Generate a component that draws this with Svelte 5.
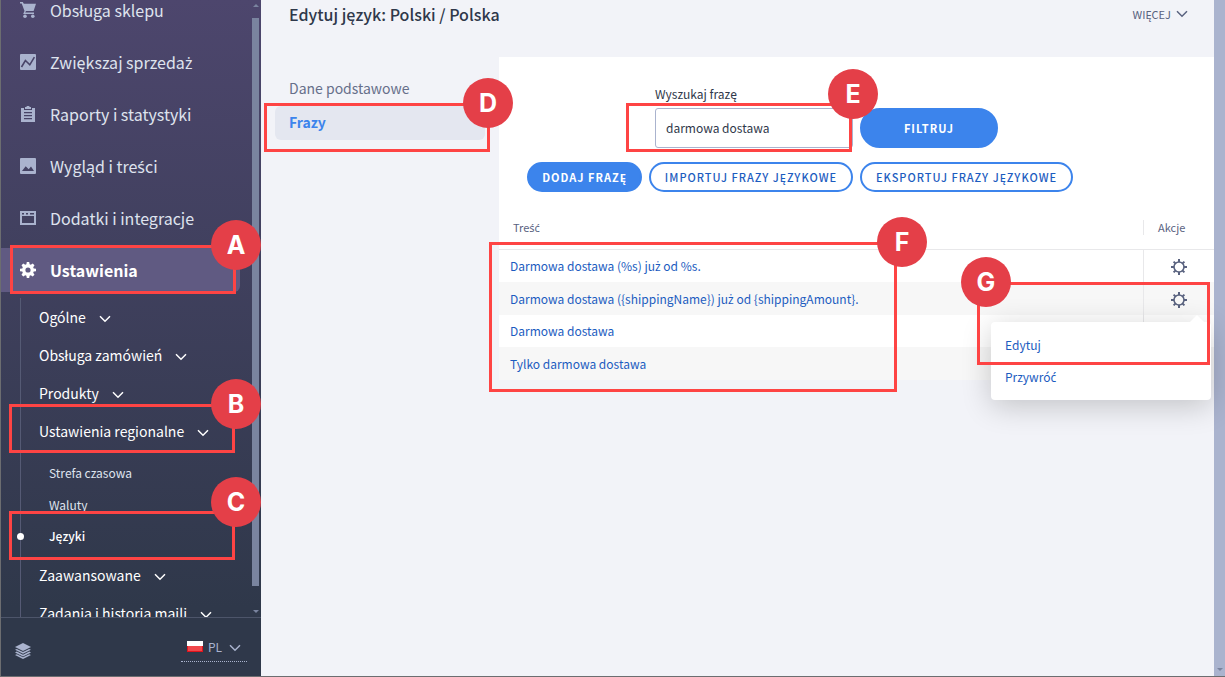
<script>
  const mainMenu = [
    { icon: 'cart', label: 'Obsługa sklepu' },
    { icon: 'chart', label: 'Zwiększaj sprzedaż' },
    { icon: 'clipboard', label: 'Raporty i statystyki' },
    { icon: 'picture', label: 'Wygląd i treści' },
    { icon: 'window', label: 'Dodatki i integracje' },
    { icon: 'gear', label: 'Ustawienia', active: true }
  ];

  const subMenu = [
    { label: 'Ogólne' },
    { label: 'Obsługa zamówień' },
    { label: 'Produkty' },
    { label: 'Ustawienia regionalne', children: ['Strefa czasowa', 'Waluty', 'Języki'] },
    { label: 'Zaawansowane' },
    { label: 'Zadania i historia maili' }
  ];

  const phrases = [
    'Darmowa dostawa (%s) już od %s.',
    'Darmowa dostawa ({shippingName}) już od {shippingAmount}.',
    'Darmowa dostawa',
    'Tylko darmowa dostawa'
  ];

  // box: frame around a step, dot: top left corner of its badge
  const steps = [
    { name: 'A', box: [10, 245, 226, 49], dot: [211, 220] },
    { name: 'B', box: [9, 404, 226, 49], dot: [211, 379] },
    { name: 'C', box: [9, 511, 226, 49], dot: [211, 477] },
    { name: 'D', box: [264, 103, 226, 49], dot: [463, 78] },
    { name: 'E', box: [626, 103, 226, 49], dot: [828, 69] },
    { name: 'F', box: [489, 242, 408, 150], dot: [877, 217] },
    { name: 'G', box: [977, 282, 233, 83], dot: [961, 257] }
  ];

  let search = 'darmowa dostawa';
  let openRow = 1;
</script>

<!-- the CJK font has no ś, ż and ć, take them from Noto Sans -->
{#snippet polish(text)}
  <span>{#each text.split(/([śżć])/) as part}{#if /^[śżć]$/.test(part)}<span class="pl">{part}</span>{:else}{part}{/if}{/each}</span>
{/snippet}

{#snippet chevron()}
  <svg class="chevron" viewBox="0 0 12 8" width="12" height="8">
    <path d="M1 1.2 6 6.2 11 1.2" fill="none" stroke="currentColor" stroke-width="1.5" />
  </svg>
{/snippet}

{#snippet menuIcon(name)}
  <svg class="menu-icon" viewBox="0 0 16 16" width="16" height="16" fill="currentColor">
    {#if name === 'cart'}
      <path d="M0 0h2.800l1 1.800H16L13.600 9H6l-.8 1.500H14V12H3.200l1.300-3L1.700 1.600H0z" />
      <circle cx="5" cy="14.2" r="1.8" />
      <circle cx="12.8" cy="14.2" r="1.8" />
    {:else if name === 'chart'}
      <path d="M1 0h14a1 1 0 0 1 1 1v14a1 1 0 0 1-1 1H1a1 1 0 0 1-1-1V1a1 1 0 0 1 1-1z" />
      <path d="M1.500 13 5.400 6.500 9.800 10.800 14.400 3.200" fill="none" stroke="#4a4569" stroke-width="1.600" />
    {:else if name === 'clipboard'}
      <path fill-rule="evenodd" d="M1 2h3v2h8V2h3v14H1zm3 4v1.200h8V6zm0 3v1.200h8V9zm0 3v1.200h8V12z" />
      <path d="M5 1h1.500a1.500 1.500 0 0 1 3 0H11v2H5z" />
    {:else if name === 'picture'}
      <path fill-rule="evenodd" d="M1 0h14a1 1 0 0 1 1 1v14a1 1 0 0 1-1 1H1a1 1 0 0 1-1-1V1a1 1 0 0 1 1-1zm1 13h12l-3-4.600-2.300 2.800-3-3z" />
    {:else if name === 'window'}
      <path fill-rule="evenodd" d="M0 1h16v14H0zm2 5v7h12V6zm0-3v1.500h2V3zm4 0v1.500h2V3zm4 0v1.500h4V3z" />
    {:else}
      <path fill-rule="evenodd" d="M6.800 0h2.400l.4 2.200 1.200.5L12.700 1.500l1.800 1.800-1.300 1.900.5 1.200 2.300.4v2.400l-2.300.4-.5 1.200 1.300 1.900-1.800 1.800-1.900-1.300-1.200.5L9.200 16H6.800l-.4-2.300-1.200-.5-1.900 1.300-1.800-1.800 1.300-1.900-.5-1.200L0 9.200V6.800l2.300-.4.5-1.200-1.300-1.900 1.800-1.800 1.900 1.200 1.200-.5zM8 5.400a2.600 2.600 0 1 0 0 5.200 2.600 2.600 0 0 0 0-5.200z" />
    {/if}
  </svg>
{/snippet}

<div class="app">
  <aside class="sidebar">
    <div class="scroller">
      <nav class="menu">
        {#each mainMenu as item}
          <a class="menu-item" class:active={item.active} href="#menu">
            {@render menuIcon(item.icon)}
            {@render polish(item.label)}
          </a>
        {/each}
        <ul class="submenu">
          {#each subMenu as item}
            <li>
              <a class="submenu-item" href="#submenu">{item.label} {@render chevron()}</a>
              {#if item.children}
                <ul class="leafs">
                  {#each item.children as child}
                    <li><a class="leaf" class:current={child === 'Języki'} href="#leaf">{child}</a></li>
                  {/each}
                </ul>
              {/if}
            </li>
          {/each}
        </ul>
      </nav>
      <div class="side-scroll">
        <span class="arrow up"></span>
        <span class="thumb"></span>
        <span class="arrow"></span>
      </div>
    </div>
    <footer class="side-footer">
      <svg viewBox="0 0 16 16" width="16" height="16" fill="currentColor">
        <path d="M8 0 16 4 8 8 0 4z" />
        <path d="M1.800 5.900 8 9l6.200-3.100L16 6.800l-8 4-8-4z" />
        <path d="M1.800 8.600 8 11.700l6.200-3.100 1.800.9-8 4-8-4z" />
        <path d="M1.800 11.200 8 14.300l6.200-3.100 1.800.9-8 3.900-8-3.900z" />
      </svg>
      <button class="language" type="button">
        <span class="flag"></span>
        PL
        {@render chevron()}
      </button>
    </footer>
  </aside>

  <main class="main">
    <header class="top">
      <h1>Edytuj język: Polski / Polska</h1>
      <button class="more" type="button">WIĘCEJ {@render chevron()}</button>
    </header>
    <div class="columns">
      <nav class="tabs">
        <a class="tab" href="#base">Dane podstawowe</a>
        <a class="tab selected" href="#phrases">Frazy</a>
      </nav>
      <section class="card">
        <form class="filter" onsubmit={(e) => e.preventDefault()}>
          <div class="field">
            <label for="search">Wyszukaj frazę</label>
            <input id="search" type="text" bind:value={search} />
          </div>
          <button class="btn primary large" type="submit">FILTRUJ</button>
        </form>
        <div class="actions">
          <button class="btn primary" type="button">DODAJ FRAZĘ</button>
          <button class="btn import" type="button">IMPORTUJ FRAZY JĘZYKOWE</button>
          <button class="btn export" type="button">EKSPORTUJ FRAZY JĘZYKOWE</button>
        </div>
        <table>
          <thead>
            <tr>
              <th>{@render polish('Treść')}</th>
              <th class="tools"><div>Akcje</div></th>
            </tr>
          </thead>
          <tbody>
            {#each phrases as phrase, i}
              <tr>
                <td><a href="#phrase">{@render polish(phrase)}</a></td>
                <td class="tools">
                  <div class="row-tools">
                    <button class="gear" type="button" aria-label="Akcje" onclick={() => (openRow = openRow === i ? -1 : i)}>
                      <svg viewBox="0 0 16 16" width="16" height="16" fill="none" stroke="currentColor">
                        <circle cx="8" cy="8" r="5" stroke-width="1.600" />
                        <path d="M8 0v3M8 13v3M0 8h3M13 8h3M2.600 2.600l1.800 1.800M11.600 11.600l1.800 1.800M2.600 13.400l1.800-1.800M11.600 4.400l1.800-1.800" stroke-width="2" />
                      </svg>
                    </button>
                    {#if openRow === i}
                      <div class="popup">
                        <a href="#edit">Edytuj</a>
                        <a href="#restore">{@render polish('Przywróć')}</a>
                      </div>
                    {/if}
                  </div>
                </td>
              </tr>
            {/each}
          </tbody>
        </table>
      </section>
    </div>
  </main>

  <div class="page-scroll"><span class="arrow"></span></div>

  {#each steps as { name, box, dot }}
    <div class="step-box" style="left: {box[0]}px; top: {box[1]}px; width: {box[2]}px; height: {box[3]}px"></div>
    <div class="step-dot" style="left: {dot[0]}px; top: {dot[1]}px">{name}</div>
  {/each}
</div>

<style>
  :global(body) {
    font-family: 'Noto Sans CJK SC', 'Noto Sans', sans-serif;
    font-size: 12px;
    background: #f2f3f8;
  }

  * {
    box-sizing: border-box;
  }

  a {
    color: inherit;
    text-decoration: none;
  }

  button,
  input {
    font-family: inherit;
  }

  button {
    padding: 0;
    border: 0;
    background: none;
    cursor: pointer;
  }

  ul {
    margin: 0;
    padding: 0;
    list-style: none;
  }

  svg {
    display: block;
    flex: none;
  }

  .pl {
    font-family: 'Noto Sans', sans-serif;
    line-height: 1;
  }

  .app {
    position: relative;
    display: flex;
    height: 100vh;
    border-left: 1px solid #6c6d70;
    border-bottom: 1px solid #6c6d70;
    overflow: hidden;
  }

  .sidebar {
    display: flex;
    flex-direction: column;
    flex: none;
    width: 260px;
    background: linear-gradient(#4d466d, #2f384a 90%);
  }

  .scroller {
    display: flex;
    flex: 1;
    min-height: 0;
    overflow: hidden;
  }

  .menu {
    flex: 1;
    margin-top: -16px;
    padding-right: 12px;
  }

  .menu-item {
    display: flex;
    align-items: center;
    gap: 14px;
    height: 44px;
    margin: 4px 0 8px;
    padding-left: 19px;
    color: #dfe3ee;
    font-size: 16px;
    border-radius: 0 6px 6px 0;
  }

  .menu-icon {
    color: #aab3ce;
  }

  .menu-item.active {
    margin-bottom: 6px;
    background: #605a82;
    color: #fff;
    font-weight: 700;
  }

  .menu-item.active .menu-icon {
    color: #fff;
  }

  .submenu {
    margin-left: 19px;
    border-left: 1px solid #555a74;
  }

  .submenu-item {
    display: flex;
    align-items: center;
    gap: 13px;
    height: 38px;
    padding-left: 18px;
    color: #fff;
    font-size: 14px;
  }

  .submenu-item .chevron {
    margin-top: 3px;
  }

  .leafs {
    padding: 6px 0 4px;
  }

  .leaf {
    position: relative;
    display: flex;
    align-items: center;
    height: 32px;
    padding-left: 28px;
    color: #dfe3ee;
  }

  .leaf.current {
    color: #fff;
    font-weight: 500;
  }

  .leaf.current::before {
    content: '';
    position: absolute;
    left: -4px;
    width: 7px;
    height: 7px;
    border-radius: 50%;
    background: #fff;
  }

  .side-scroll {
    display: flex;
    flex-direction: column;
    align-items: center;
    width: 7px;
    margin-right: 2px;
    padding: 4px 0;
  }

  .thumb {
    flex: 1;
    width: 7px;
    margin: 11px 0 24px;
    background: #7a849f;
  }

  .arrow {
    border: 3px solid transparent;
    border-top-color: #7a849f;
    border-bottom: 0;
  }

  .arrow.up {
    border-top: 0;
    border-bottom: 3px solid #7a849f;
  }

  .side-footer {
    display: flex;
    align-items: center;
    justify-content: space-between;
    height: 59px;
    padding: 0 14px;
    border-top: 1px solid #4d556a;
    color: #aab3ce;
  }

  .side-footer > svg {
    margin-top: 8px;
  }

  .language {
    display: flex;
    align-items: center;
    gap: 5px;
    width: 66px;
    height: 30px;
    padding-left: 6px;
    border-bottom: 1px dotted #aab3ce;
    color: #aab3ce;
    font-size: 12px;
  }

  .language .chevron {
    margin: 2px 0 0 2px;
  }

  .flag {
    width: 16px;
    height: 11px;
    border: 1px solid #e8232a;
    border-top-color: #fff;
    background: linear-gradient(#fff 45%, #f0474b 45%);
    border-image: linear-gradient(#fff 50%, #e0141c 50%) 1;
  }

  .main {
    flex: 1;
    min-width: 0;
  }

  .top {
    display: flex;
    align-items: flex-start;
    justify-content: space-between;
    height: 57px;
    padding: 2px 26px 0 28px;
  }

  h1 {
    margin: 0;
    color: #2f384a;
    font-size: 16px;
    font-weight: 500;
    line-height: 24px;
  }

  .more {
    display: flex;
    align-items: center;
    gap: 5px;
    height: 24px;
    color: #59627f;
    font-size: 11px;
  }

  .columns {
    display: flex;
    align-items: flex-start;
  }

  .tabs {
    width: 210px;
    margin: 15px 14px 0;
  }

  .tab {
    display: flex;
    align-items: center;
    height: 34px;
    padding: 0 14px 2px;
    border-radius: 6px;
    color: #666f8a;
    font-size: 14px;
  }

  .tab.selected {
    background: #e4e7f0;
    color: #3c84ec;
    font-weight: 700;
  }

  .card {
    flex: 1;
    background: #fff;
  }

  .filter {
    display: flex;
    align-items: flex-end;
    gap: 7px;
    padding: 28px 28px 14px 156px;
  }

  .field {
    display: flex;
    flex-direction: column;
    gap: 5px;
    width: 198px;
  }

  label {
    color: #2f384a;
    line-height: 18px;
  }

  input {
    width: 100%;
    height: 40px;
    padding: 0 10px 2px;
    border: 1px solid #aab3ce;
    border-radius: 3px;
    color: #2f384a;
    font-size: 12px;
  }

  .actions {
    display: flex;
    gap: 7px;
    padding: 0 28px 28px;
  }

  .btn {
    width: 115px;
    height: 30px;
    padding-bottom: 1px;
    border: 2px solid #3c84ec;
    border-radius: 20px;
    color: #1c5cc0;
    font-size: 11px;
    font-weight: 500;
    letter-spacing: 1px;
    white-space: nowrap;
  }

  .btn.primary {
    background: #3c84ec;
    color: #fff;
    font-weight: 700;
  }

  .btn.large {
    width: 138px;
    height: 40px;
  }

  .btn.import {
    width: 204px;
  }

  .btn.export {
    width: 213px;
  }

  table {
    width: 100%;
    border-collapse: separate;
    border-spacing: 0;
  }

  th {
    height: 30px;
    padding: 0 14px 14px;
    border-bottom: 1px solid #e8e8ea;
    color: #59627f;
    font-size: 11px;
    font-weight: 400;
    line-height: 15px;
    text-align: left;
  }

  th.tools {
    width: 71px;
    padding: 0 0 14px;
  }

  th.tools div {
    padding-left: 14px;
    border-left: 1px solid #e8e8ea;
  }

  td {
    height: 32px;
    padding: 0 11px;
    color: #1c5cc0;
    line-height: 18px;
  }

  td.tools {
    padding: 0;
    border-left: 1px solid #e8e8ea;
  }

  tbody tr:nth-child(even) td {
    height: 33px;
    background: #f7f7f7;
  }

  .row-tools {
    position: relative;
    display: flex;
    justify-content: center;
    padding-top: 2px;
  }

  .gear {
    color: #59627f;
  }

  .popup {
    position: absolute;
    z-index: 1;
    top: 32px;
    right: 3px;
    width: 220px;
    padding: 7px 14px;
    border-radius: 4px;
    background: #fff;
    box-shadow: 0 6px 30px rgba(0, 0, 0, 0.2);
  }

  .popup::before {
    content: '';
    position: absolute;
    top: -7px;
    right: 7px;
    border: 7px solid transparent;
    border-top: 0;
    border-bottom-color: #fff;
  }

  .popup a {
    display: block;
    line-height: 32px;
  }

  .page-scroll {
    display: flex;
    align-items: flex-end;
    justify-content: center;
    width: 11px;
    padding-bottom: 5px;
    background: #aab3ce;
  }

  .step-box {
    position: absolute;
    z-index: 2;
    margin-left: -1px;
    border: 3px solid #fe4444;
    pointer-events: none;
  }

  .step-dot {
    position: absolute;
    z-index: 3;
    width: 50px;
    height: 50px;
    margin-left: -1px;
    border-radius: 50%;
    background: #e43f48;
    color: #fff;
    font: 700 25px/50px Inter, sans-serif;
    text-align: center;
  }
</style>
